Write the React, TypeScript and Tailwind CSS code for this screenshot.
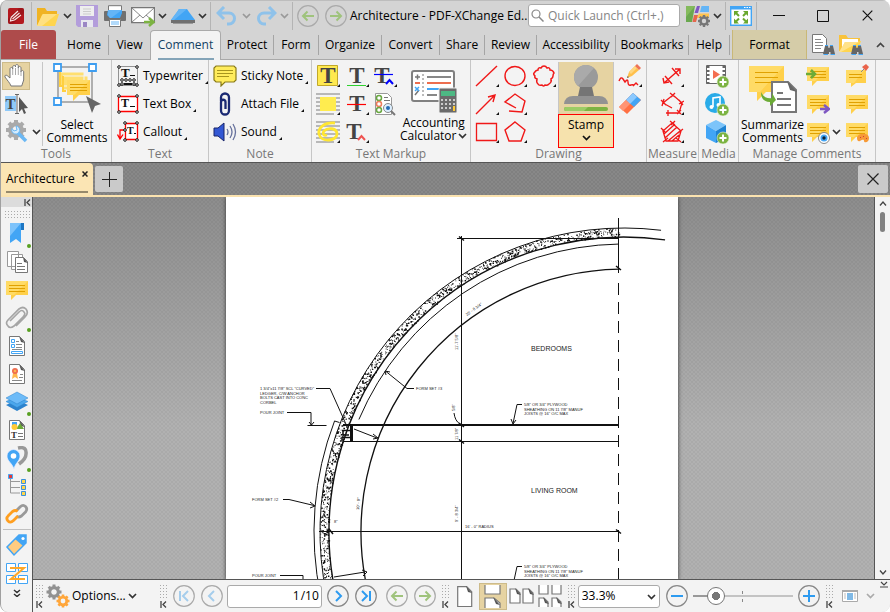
import React from "react";

type Kids = { children?: React.ReactNode };

/* ---------- shared bits ---------- */

function Svg({ w = 24, h = 24, box, children }: Kids & { w?: number; h?: number; box?: string }) {
  return (
    <svg width={w} height={h} viewBox={box ?? `0 0 ${w} ${h}`} fill="none" className="shrink-0" aria-hidden="true">
      {children}
    </svg>
  );
}

function Chevron({ color = "#333" }: { color?: string }) {
  return (
    <Svg w={9} h={6}>
      <path d="M1 1l3.500 3.500L8 1" stroke={color} strokeWidth="1.700" />
    </Svg>
  );
}

function Mark() {
  return (
    <Svg w={3} h={3}>
      <path d="M3 0v3H0z" fill="#111" />
    </Svg>
  );
}

function Divider() {
  return <span className="h-7 w-px shrink-0 bg-[#b4b4b4]" />;
}

function TBtn({ label, className = "", children }: Kids & { label: string; className?: string }) {
  return (
    <button aria-label={label} className={`flex shrink-0 items-center justify-center ${className}`}>
      {children}
    </button>
  );
}

function Bubble({ lines = true }: { lines?: boolean }) {
  return (
    <>
      <path d="M1 3h22v14H11l-5 5v-5H1z" fill="#ffd04a" />
      <path d="M1 3h22L9 17H1z" fill="#ffdb66" />
      {lines && <path d="M4 7.500h16M4 10.500h16M4 13.500h16" stroke="#e0a100" />}
    </>
  );
}

function Plus() {
  return (
    <>
      <circle cx="18" cy="18" r="6" fill="#7cb342" stroke="#e8f3d8" strokeWidth=".6" />
      <path d="M14.500 18h7M18 14.500v7" stroke="#fff" strokeWidth="2" />
    </>
  );
}

function Gear({ x, y, r, color }: { x: number; y: number; r: number; color: string }) {
  return (
    <g transform={`translate(${x} ${y})`}>
      <circle r={r * 0.58} stroke={color} strokeWidth={r * 0.42} />
      {[0, 45, 90, 135, 180, 225, 270, 315].map((a) => (
        <rect key={a} x={-r * 0.2} y={-r} width={r * 0.4} height={r * 0.35} fill={color} transform={`rotate(${a})`} />
      ))}
    </g>
  );
}

function Sheet({ children }: Kids) {
  return (
    <>
      <path d="M4.500 2.500h10l5 5v14h-15z" fill="#fff" stroke="#777" />
      <path d="M14 2l6 7-4-1z" fill="#555" />
      {children}
    </>
  );
}

function CircleArrow({ d, color, ring = "#aaa" }: { d: string; color: string; ring?: string }) {
  return (
    <Svg w={22} h={22}>
      <circle cx="11" cy="11" r="10.300" stroke={ring} strokeWidth="1.200" />
      <path d={d} stroke={color} strokeWidth="2" />
    </Svg>
  );
}

const LEFT_ARROW = "M17 11H6M10.500 6.500L6 11l4.500 4.500";
const RIGHT_ARROW = "M5 11h11M11.500 6.500L16 11l-4.500 4.500";

/* ---------- title bar ---------- */

function TitleBar() {
  return (
    <header className="flex h-[30px] shrink-0 items-center border-t border-[#bdbdbd]">
      <TBtn label="PDF-XChange Editor" className="w-[30px]">
        <Svg w={16} h={16}>
          <rect width="16" height="16" rx="2" fill="#b3191f" />
          <path d="M0 11L11 0h3a2 2 0 0 1 2 2v3L5 16H2a2 2 0 0 1-2-2z" fill="#8d1016" opacity=".55" />
          <path d="M3 9.500L10 3M4.500 11L11.500 5M6.500 12L13 7M3 9.500L2.500 13l4-1" stroke="#f7e4e4" strokeWidth="1.200" />
        </Svg>
      </TBtn>
      <Divider />
      <TBtn label="Open" className="ml-1">
        <Svg w={24} h={22}>
          <path d="M1 3h8l2 3h10v4H7L3 20H1z" fill="#f0b323" />
          <path d="M7 9h16l-4 12H1z" fill="#ffd54f" />
          <path d="M7 9h14L6 21H1l5-11z" fill="#ffe082" />
        </Svg>
      </TBtn>
      <TBtn label="Open menu" className="ml-[3px]"><Chevron /></TBtn>
      <TBtn label="Save" className="ml-1">
        <Svg w={22} h={22}>
          <path d="M0 0h22v22H2l-2-2z" fill="#b39ddb" />
          <path d="M4 1h14v10H4z" fill="#eee" />
          <path d="M7 4h8M7 6.500h8M7 9h8" stroke="#ccc" />
          <path d="M5 15h12v7H5z" fill="#e7e7ef" />
          <path d="M7 17h4v5H7z" fill="#9a86c4" />
        </Svg>
      </TBtn>
      <TBtn label="Print" className="ml-[6px]">
        <Svg w={22} h={22}>
          <path d="M4.500 8V.7h13V8" fill="#fff" stroke="#777" />
          <rect y="6" width="22" height="10" rx="1" fill="#707070" />
          <path d="M4 5h14v3l-2 5H6L3 10z" fill="#42a5f5" />
          <path d="M4 5h14L7 13H6L4 10z" fill="#64b5f6" />
          <path d="M5.500 14.500h11v7h-11z" fill="#fff" stroke="#777" />
          <path d="M7 17h8M7 19h8" stroke="#64b5f6" />
        </Svg>
      </TBtn>
      <TBtn label="Email" className="ml-1">
        <Svg w={26} h={22}>
          <path d="M1.600 2.600h22.800v15H1.600z" fill="#fff" stroke="#777" strokeWidth="1.200" />
          <path d="M2 3l11 10L24 3M2 17l8-7M24 17l-8-7" stroke="#888" />
          <path d="M14 17h9M19 13l4.500 4-4.500 4" stroke="#7cb342" strokeWidth="2.500" />
        </Svg>
      </TBtn>
      <TBtn label="Email menu" className="ml-[2px]"><Chevron /></TBtn>
      <TBtn label="Scan" className="ml-1">
        <Svg w={24} h={20}>
          <path d="M8 3h8l2 3 6 8H0l6-8z" fill="#42a5f5" />
          <path d="M8 3h8L3 14H0l6-8z" fill="#64b5f6" />
          <path d="M0 14h24v3H0z" fill="#707070" />
          <path d="M2 17h20v1H2z" fill="#999" />
        </Svg>
      </TBtn>
      <TBtn label="Scan menu" className="mx-[3px]"><Chevron /></TBtn>
      <Divider />
      <TBtn label="Undo" className="ml-[5px]">
        <Svg w={22} h={20}>
          <path d="M2 7h11a5.500 5.500 0 0 1 0 11H11M8 1L2 7l6 6" stroke="#8fc2ea" strokeWidth="3" />
        </Svg>
      </TBtn>
      <TBtn label="Undo history" className="ml-1"><Chevron color="#999" /></TBtn>
      <TBtn label="Redo" className="ml-1">
        <Svg w={22} h={20}>
          <path d="M20 7H9a5.500 5.500 0 0 0 0 11h2M14 1l6 6-6 6" stroke="#8fc2ea" strokeWidth="3" />
        </Svg>
      </TBtn>
      <TBtn label="Redo history" className="mx-[3px]"><Chevron color="#999" /></TBtn>
      <Divider />
      <TBtn label="Previous view" className="ml-1"><CircleArrow d={LEFT_ARROW} color="#9fc37c" /></TBtn>
      <TBtn label="Next view" className="ml-[6px]"><CircleArrow d={RIGHT_ARROW} color="#9fc37c" /></TBtn>
      <h1 className="min-w-0 flex-1 pl-[3px] whitespace-nowrap">Architecture - PDF-XChange Ed..</h1>
      <label className="flex h-[23px] w-[152px] shrink-0 items-center gap-1 rounded-[3px] border border-[#aaa] bg-white pl-[2px]">
        <Svg w={13} h={13}>
          <circle cx="5" cy="5" r="4" stroke="#888" strokeWidth="1.200" />
          <path d="M8 8l4.500 4.500" stroke="#888" strokeWidth="1.500" />
        </Svg>
        <input aria-label="Quick Launch" placeholder="Quick Launch (Ctrl+.)" className="w-full min-w-0 bg-transparent outline-none placeholder:text-[#858585]" />
      </label>
      <span className="ml-[3px]"><Divider /></span>
      <TBtn label="UI options" className="ml-[2px]">
        <Svg w={25} h={22}>
          <path d="M1 1h9L7 17H1z" fill="#6aa84f" />
          <path d="M1 1h9L1 12z" fill="#84ba5c" />
          <path d="M12 1h3l-2 7H9.500z" fill="#7e57c2" />
          <path d="M16.500 1H24v6h-9z" fill="#64b5f6" />
          <path d="M14 8.500h10V13H12z" fill="#ffc44d" />
          <path d="M9 10h4l-2 7H7.500z" fill="#e5674c" />
          <Gear x={19} y={16} r={6} color="#777" />
        </Svg>
      </TBtn>
      <TBtn label="UI options menu" className="mx-[3px]"><Chevron /></TBtn>
      <Divider />
      <TBtn label="Full screen" className="mx-1">
        <Svg w={22} h={20}>
          <path d="M.7.700h20.600v18.600H.7z" fill="#fff" stroke="#42a5f5" strokeWidth="1.400" />
          <path d="M0 0h22v3.500H0z" fill="#42a5f5" />
          <path d="M14 1.500h1.500m1 0H18m1 0h1.500" stroke="#fff" />
          <path d="M4 5h5L4 10zM18 5h-5l5 5zM4 17.500h5l-5-5zM18 17.500h-5l5-5z" fill="#6aa82e" />
          <path d="M5 6l4 4M17 6l-4 4M5 16.500l4-4M17 16.500l-4-4" stroke="#6aa82e" strokeWidth="2" />
        </Svg>
      </TBtn>
      <Divider />
      <TBtn label="Minimize" className="w-[44px]"><Svg w={12} h={2}><path d="M0 .5h12" stroke="#111" /></Svg></TBtn>
      <TBtn label="Maximize" className="w-[44px]"><Svg w={12} h={12}><path d="M.5.500h11v11H.5z" stroke="#111" /></Svg></TBtn>
      <TBtn label="Close" className="w-[45px]"><Svg w={11} h={11}><path d="M.7.700l9.600 9.600M10.300.700L.7 10.300" stroke="#111" strokeWidth="1.200" /></Svg></TBtn>
    </header>
  );
}

/* ---------- ribbon tabs ---------- */

const tabs = [
  { name: "Organize", w: "w-[63px]" },
  { name: "Convert", w: "w-[58px]" },
  { name: "Share", w: "w-[45px]" },
  { name: "Review", w: "w-[52px]" },
  { name: "Accessibility", w: "w-[79px]" },
  { name: "Bookmarks", w: "w-[73px]" },
  { name: "Help", w: "w-[41px]" },
];

function Binoculars() {
  return (
    <>
      <path d="M14 13h3l.500 2h1l.500-2h3l2 8h-4.500v-2h-1.500v2H12z" fill="#666" />
      <path d="M14 12.500h3M19 12.500h3M12.500 21.500H17M19.500 21.500H24" stroke="#42a5f5" />
    </>
  );
}

function RibbonTabs() {
  const tab = "flex h-5 shrink-0 items-center justify-center border-r border-[#a5a5a5]";
  return (
    <nav className="flex h-[30px] shrink-0 items-center border-b border-[#a9a9a9]">
      <button className="h-full w-[55px] shrink-0 rounded-t-[3px] bg-[#ae4b4b] text-white">File</button>
      <button className={`${tab} w-[53px] pl-1`}>Home</button>
      <button className="w-[41px] shrink-0">View</button>
      <button className="flex h-[30px] w-[71px] shrink-0 flex-col items-center rounded-t border border-b-0 border-[#aaa] bg-[#f3f3f3] pt-[6px] text-[#123f63]">
        Comment
        <span className="mt-auto h-[2px] w-14 bg-[#84a4b8]" />
      </button>
      <button className={`${tab} w-[53px]`}>Protect</button>
      <button className={`${tab} w-[45px]`}>Form</button>
      {tabs.map((t) => (
        <button key={t.name} className={`${tab} ${t.w}`}>{t.name}</button>
      ))}
      <button className="ml-[2px] h-full w-[75px] shrink-0 border-x border-[#c9b877] bg-[#d5cca8]">Format</button>
      <TBtn label="Find" className="ml-1">
        <Svg w={24} h={23}>
          <path d="M1.500 1.500h10l4 4v14h-14z" fill="#fff" stroke="#777" />
          <path d="M4 6.500h6M4 9.500h8M4 12.500h8M4 15.500h6" stroke="#888" />
          <Binoculars />
        </Svg>
      </TBtn>
      <TBtn label="Search" className="ml-1">
        <Svg w={24} h={23}>
          <path d="M0 2h7l2 3h12v4H6L2 18H0z" fill="#f9c33c" />
          <path d="M6 8h16l-4 11H1z" fill="#ffd54f" />
          <path d="M3 6h16v3H6L3 15z" fill="#fff" />
          <path d="M6 9h14L2 19H0z" fill="#ffe28a" />
          <Binoculars />
        </Svg>
      </TBtn>
      <TBtn label="Collapse ribbon" className="ml-auto pr-[5px]">
        <Svg w={9} h={6}><path d="M1 5l3.500-3.500L8 5" stroke="#444" strokeWidth="1.700" /></Svg>
      </TBtn>
    </nav>
  );
}

/* ---------- ribbon ---------- */

function Group({ title, className, children }: Kids & { title: string; className: string }) {
  return (
    <section className={`flex shrink-0 flex-col border-r border-[#c6c6c6] pt-[2px] ${className}`}>
      <div className="flex h-[84px]">{children}</div>
      <h2 className="text-center leading-4 whitespace-nowrap text-[#777]">{title}</h2>
    </section>
  );
}

function Tool({ label, mark = true, children }: Kids & { label: string; mark?: boolean }) {
  return (
    <button aria-label={label} className="relative flex h-7 w-7 shrink-0 items-center justify-center">
      {children}
      {mark && <span className="absolute right-[2px] bottom-[3px]"><Mark /></span>}
    </button>
  );
}

function RowTool({ label, children }: Kids & { label: string }) {
  return (
    <button className="flex h-7 items-center gap-1 whitespace-nowrap">
      {children}
      <span className="flex h-full items-center gap-[2px]">
        {label}
        <span className="self-end pb-[6px]"><Mark /></span>
      </span>
    </button>
  );
}

function BigT({ x = 12, y = 19, size = 23, color = "#444" }) {
  return (
    <text x={x} y={y} fontSize={size} fontFamily="Liberation Serif, serif" fontWeight="700" textAnchor="middle" fill={color}>T</text>
  );
}

const dots = (pts: number[][]) => pts.map(([x, y]) => <circle key={`${x}-${y}`} cx={x} cy={y} r="1.300" fill="#fff" stroke="#111" />);

function ToolsGroup() {
  return (
    <Group title="Tools" className="w-[111px]">
      <div className="flex w-[42px] flex-col border-r border-[#c6c6c6]">
        <button aria-label="Hand" className="ml-px flex h-7 w-7 items-center justify-center border border-[#cdbb8a] bg-[#e6d3a2]">
          <Svg>
            <path d="M7 22c-1-3-4-6-6-9-.8-1.500 1-2.500 2.300-1.300L6 14V5c0-2 2.700-2 2.700 0V3c0-2 2.800-2 2.800 0V2c0-2 2.800-2 2.800 0v2c0-2 2.700-2 2.700 0v4c0-2 2.700-2 2.700 0v8l-2 6z" fill="#fff" stroke="#777" />
            <path d="M8.700 5v6M11.500 4v7M14.300 4v7M17 7v5" stroke="#aaa" />
          </Svg>
        </button>
        <TBtn label="Select text" className="h-7 w-[30px]">
          <Svg>
            <path d="M1 4h11v15H1z" fill="#90caf9" />
            <text x="6.500" y="17" fontSize="15" fontFamily="Liberation Serif, serif" fontWeight="700" textAnchor="middle" fill="#444">T</text>
            <path d="M11 2.500h4M13 3v18M11 21.500h4" stroke="#666" />
            <path d="M15 5l9 11-4 .5 2 4.500-2 1-2-5-3 3z" fill="#555" />
          </Svg>
        </TBtn>
        <div className="flex h-7 items-center">
          <TBtn label="Settings" className="w-[31px]">
            <Svg>
              <Gear x={11} y={10} r={10} color="#aaa" />
              <path d="M12 12l9 9" stroke="#6bb8f4" strokeWidth="3.500" />
              <path d="M7 8.500a4 4 0 1 0 4-2.500l1 4-3 1z" fill="#d5ebfc" stroke="#6bb8f4" />
            </Svg>
          </TBtn>
          <Chevron />
        </div>
      </div>
      <button className="flex flex-1 flex-col items-center pt-px leading-[13px]">
        <Svg w={48} h={52}>
          <path d="M5 4h34v35H5z" stroke="#999" strokeWidth="1.500" />
          <path d="M7 9h24v14H7zM10 13h25v14H10z" fill="#ffdf70" stroke="#f3f3f3" />
          <path d="M7 9v14h3M10 13v15h3" stroke="#ffcf3f" strokeWidth="2" />
          <path d="M14 17h23v15H26l-6 6v-6h-6z" fill="#ffd04a" />
          <path d="M14 17h23L21 32h-7z" fill="#ffdb66" />
          <path d="M17 21.500h17M17 24.500h17M17 27.500h17" stroke="#e0a100" />
          <path d="M1 1h7v7H1zM36 1h7v7h-7zM1 35h7v7H1z" fill="#fff" stroke="#3d9df0" strokeWidth="1.800" />
          <path d="M33 33l15 8-6 2-3 7z" fill="#666" />
        </Svg>
        <span className="mt-[3px]">Select<br />Comments</span>
      </button>
    </Group>
  );
}

function TextGroup() {
  return (
    <Group title="Text" className="w-[97px]">
      <div className="flex flex-col items-start pl-[5px]">
        <RowTool label="Typewriter">
          <Svg w={22} h={22}>
            <path d="M1.500 1.500h19v19h-19z" stroke="#333" strokeDasharray="1 1" />
            <text x="4" y="12" fontSize="13" fontFamily="Liberation Serif, serif" fontWeight="700" fill="#111">T</text>
            <path d="M13 10.500h5" stroke="#111" />
            {dots([[5, 15], [9, 15], [13, 15], [17, 15], [5, 19], [17, 19]])}
            <path d="M7 19h8" stroke="#111" strokeWidth="2" />
            {dots([[2, 2], [20, 2], [2, 20], [20, 20]])}
          </Svg>
        </RowTool>
        <RowTool label="Text Box">
          <Svg w={22} h={22}>
            <path d="M1.500 3.500h19v15h-19z" fill="#fff" stroke="#f00" strokeWidth="1.300" />
            <text x="4" y="14" fontSize="12" fontFamily="Liberation Serif, serif" fontWeight="700" fill="#111">T</text>
            <path d="M13 13.500h5" stroke="#111" />
            {dots([[2, 3], [20, 3], [2, 19], [20, 19]])}
          </Svg>
        </RowTool>
        <RowTool label="Callout">
          <Svg w={22} h={22}>
            <path d="M8.500 2.500h12v16h-12z" fill="#fff" stroke="#f00" strokeWidth="1.300" />
            <path d="M8 9H3v8M.5 13.500L3 18l3-4.500" stroke="#f00" strokeWidth="1.300" />
            <text x="10" y="13" fontSize="10" fontFamily="Liberation Serif, serif" fontWeight="700" fill="#111">T</text>
            <path d="M17 12.500h2" stroke="#111" />
            {dots([[8, 2], [20, 2], [8, 9], [8, 19], [20, 19]])}
          </Svg>
        </RowTool>
      </div>
    </Group>
  );
}

function NoteGroup() {
  return (
    <Group title="Note" className="w-[103px]">
      <div className="flex flex-col items-start pl-1">
        <RowTool label="Sticky Note">
          <Svg w={24} h={22}>
            <path d="M3 1h18l2 2v12l-2 2H12l-4 4v-4H3l-2-2V3z" fill="#ffec5c" stroke="#897b18" strokeWidth="1.200" />
            <path d="M4 5.500h16M4 8.500h16M4 11.500h12" stroke="#a7951d" />
          </Svg>
        </RowTool>
        <RowTool label="Attach File">
          <Svg w={24} h={24}>
            <path d="M8 9V5.500a4 4 0 0 1 8 0v13a4 4 0 0 1-8 0V10a2.200 2.200 0 0 1 4.500 0v7" stroke="#1b2a73" strokeWidth="2.300" />
          </Svg>
        </RowTool>
        <RowTool label="Sound">
          <Svg w={24} h={20}>
            <path d="M1 6h4l6-5v18l-6-5H1z" fill="#3358d4" stroke="#18256b" />
            <path d="M14 7q2 3 0 6M17 4q4 6 0 12M20 2q5 8 0 16" stroke="#66719c" strokeWidth="1.300" />
          </Svg>
        </RowTool>
      </div>
    </Group>
  );
}

function MarkupGroup() {
  return (
    <Group title="Text Markup" className="w-[159px]">
      <div className="ml-[2px] grid w-[86px] shrink-0 grid-cols-3">
        <Tool label="Highlight text">
          <Svg><path d="M1.500 1.500h20v20h-20z" fill="#ffe94f" stroke="#c1a82a" /><BigT /></Svg>
        </Tool>
        <Tool label="Underline text"><Svg><BigT /><path d="M2 21.500h19" stroke="#2fd12f" /></Svg></Tool>
        <Tool label="Replace text">
          <Svg><BigT x={9} /><path d="M1 10.500h19" stroke="#00f" strokeWidth="1.200" /><path d="M13 20l3.500-4 3.500 4" stroke="#00f" strokeWidth="2" /></Svg>
        </Tool>
        <Tool label="Highlight area">
          <Svg><path d="M0 2h24M0 6h24M0 10h24M0 14h24M0 18h24M0 22h18" stroke="#a5a5a5" strokeWidth="1.500" /><path d="M4 5h16v14H4z" fill="#ffec4f" /></Svg>
        </Tool>
        <Tool label="Strikeout text"><Svg><BigT /><path d="M2 12.500h19" stroke="#f00" strokeWidth="1.200" /></Svg></Tool>
        <Tool label="Check text" mark={false}>
          <Svg>
            <path d="M2.500 1.500h12l4 4v17h-16z" fill="#fff" stroke="#999" />
            <circle cx="6" cy="6" r="2.500" stroke="#69a842" strokeWidth="1.500" />
            <circle cx="6" cy="12" r="2.500" stroke="#ed7d5c" strokeWidth="1.500" />
            <circle cx="6" cy="18" r="2.500" stroke="#69a842" strokeWidth="1.500" />
            <path d="M11 5.500h4M11 8.500h6" stroke="#777" />
            <circle cx="15" cy="16" r="4.500" fill="#dbeeff" stroke="#888" />
            <circle cx="15" cy="16" r="2" fill="#236bb5" />
            <path d="M18 19l4 4" stroke="#777" strokeWidth="2" />
          </Svg>
        </Tool>
        <Tool label="Freehand highlight">
          <Svg><path d="M0 2h24M0 6h24M0 10h24M0 14h24M0 18h24M0 22h18" stroke="#a5a5a5" strokeWidth="1.500" /><path d="M19 3C8 2 2 8 3 14c2 9 18 7 18 0 0-6-9-7-13-3-2 3 0 5 3 4" stroke="#ffe632" strokeWidth="2.800" /></Svg>
        </Tool>
        <Tool label="Insert text"><Svg><BigT x={9} /><path d="M13 20l3.500-4 3.500 4" stroke="#ef5350" strokeWidth="2" /></Svg></Tool>
      </div>
      <button className="flex flex-1 flex-col items-center pt-[7px] pr-[6px] leading-[13px]">
        <Svg w={46} h={44}>
          <rect x="1" y="2" width="42" height="30" rx="2" fill="#fff" stroke="#808080" strokeWidth="2" />
          <path d="M4 8h5M6.500 5.500v5M4 26l4-5" stroke="#777" strokeWidth="1.500" />
          <path d="M4 14h5" stroke="#ed6e4f" strokeWidth="2" />
          <path d="M4 18l4 4M8 18l-4 4" stroke="#42a5f5" strokeWidth="1.500" />
          <path d="M12 5v24" stroke="#777" strokeDasharray="2 2" />
          <path d="M16 8h24M16 26h10" stroke="#888" strokeWidth="2" />
          <path d="M16 14h24" stroke="#ed6e4f" strokeWidth="2" />
          <path d="M16 20h12" stroke="#42a5f5" strokeWidth="2" />
          <rect x="28" y="19" width="18" height="25" rx="1" fill="#6b6b6b" stroke="#eee" />
          <path d="M30 22h14v5H30z" fill="#4db984" />
          <path d="M30 31h14M30 35h14M30 39h14" stroke="#ccc" strokeWidth="2" strokeDasharray="2 2" />
          <path d="M43 37v5" stroke="#ffca36" strokeWidth="2" />
        </Svg>
        <span className="mt-[3px]">Accounting</span>
        <span className="flex items-center gap-[2px]">Calculator <Chevron /></span>
      </button>
    </Group>
  );
}

const RED = "#f01818";

function DrawingGroup() {
  return (
    <Group title="Drawing" className="w-[176px]">
      <div className="ml-[2px] grid w-[85px] shrink-0 grid-cols-3">
        <Tool label="Line"><Svg><path d="M1 22L22 2" stroke={RED} strokeWidth="1.400" /></Svg></Tool>
        <Tool label="Oval"><Svg><ellipse cx="12" cy="12" rx="10" ry="9.500" stroke={RED} strokeWidth="1.400" /></Svg></Tool>
        <Tool label="Cloud"><Svg><path d="M12 2q2 0 3 2 3-1 3 2 3 0 4 3-1 1-1 3 0 2-2 3 1 3-2 5-2 2-4 1-1 2-3 0-3 1-4-1-2-2-1-5-3-1-2-3-2-2-1-3 2-3 4-3 0-3 3-2 1-2 3-2z" stroke={RED} strokeWidth="1.500" /></Svg></Tool>
        <Tool label="Arrow"><Svg><path d="M1 22L19 4M13 5l7-2-2 7" stroke={RED} strokeWidth="1.400" /></Svg></Tool>
        <Tool label="Polyline"><Svg><path d="M13 16L2 10l10-8 10 7-3 11-13-1" stroke={RED} strokeWidth="1.400" /></Svg></Tool>
        <span />
        <Tool label="Rectangle"><Svg><path d="M1.500 3.500h20v17h-20z" stroke={RED} strokeWidth="1.300" /></Svg></Tool>
        <Tool label="Polygon"><Svg><path d="M12 2l10 8-4 11H6L2 10z" stroke={RED} strokeWidth="1.400" /></Svg></Tool>
      </div>
      <button className="flex h-[86px] w-14 shrink-0 flex-col items-center">
        <span className="flex h-[52px] w-full justify-center border-x border-[#c6c6c6] bg-[#e6d3a2] pt-[2px]">
          <Svg w={46} h={48}>
            <circle cx="23" cy="13" r="12" fill="#9a9a9a" />
            <path d="M15 22a12 12 0 0 1 16-18z" fill="#aaa" />
            <path d="M17 23h12l2 9H15z" fill="#757575" />
            <path d="M1 40q1-8 9-8h26q8 0 9 8z" fill="#929292" />
            <rect x="1" y="43" width="44" height="4" rx="2" fill="#7cb342" />
            <path d="M3 43h22l-4 4H3a2 2 0 0 1 0-4z" fill="#9ccc65" />
          </Svg>
        </span>
        <span className="flex h-[34px] w-full flex-col items-center gap-[2px] border border-[#f00] bg-[#f6e2ad] pt-px leading-[17px]">
          Stamp
          <Chevron color="#111" />
        </span>
      </button>
      <div className="ml-[2px]">
        <Tool label="Pencil">
          <Svg>
            <path d="M1 17q2-5 4-2t2 3q3-4 3 0t3 3 2 1l3-3 2 2" stroke={RED} strokeWidth="1.400" />
            <path d="M9 14l2-6 6-6 4 4-7 6z" fill="#ffc04b" />
            <path d="M11 8l6-6 2 2-6 6z" fill="#ffd67f" />
            <path d="M17 2l4 4 2-2-4-4z" fill="#ee7256" />
            <path d="M9 14l.7-2 1.300 1.300z" fill="#555" />
          </Svg>
        </Tool>
        <Tool label="Eraser" mark={false}>
          <Svg>
            <path d="M1 15L15 1l8 7L9 22z" fill="#ff7043" />
            <path d="M8 8l7-7 8 7-7 7z" fill="#42a5f5" />
            <path d="M8 8l7-7 4 4-7 7z" fill="#8bc9ff" />
            <path d="M1 15l7-7 4 4-7 7z" fill="#ff9474" />
          </Svg>
        </Tool>
      </div>
    </Group>
  );
}

function MeasureAndMedia() {
  return (
    <>
      <Group title="Measure" className="w-[52px]">
        <div className="ml-[11px]">
          <Tool label="Distance"><Svg><path d="M4 19L20 5M3 14l1 5 5-1M15 5h5v5M5 12l7 8M12 4l7 8" stroke={RED} strokeWidth="1.400" /></Svg></Tool>
          <Tool label="Perimeter"><Svg><path d="M12 16L3 11l10-8 9 8-3 10H6M1 8l5 5M4 7l-2 7M10 1l5 4M15 1l-4 4M19 12l5-3M19 8l4 5M17 18l4 4M21 18l-4 4M8 18v6" stroke={RED} strokeWidth="1.300" /></Svg></Tool>
          <Tool label="Area"><Svg><path d="M12 3l9 8-3 10H6L3 11zM4 14L14 5M5 18L17 7M8 21L20 11M12 21l7-6M1 8l5 5M10 1l5 4M15 1l-4 4M18 13l5-4M16 18l5 4M3 22l5-4" stroke={RED} strokeWidth="1.300" /></Svg></Tool>
        </div>
      </Group>
      <Group title="Media" className="w-10">
        <div className="ml-1">
          <Tool label="Add video" mark={false}>
            <Svg><path d="M1.500 1.500h19v18h-19z" fill="#fff" stroke="#666" /><path d="M3 2v18M19 2v18" stroke="#666" strokeWidth="3" strokeDasharray="2 2" /><path d="M8 6l7 4.500-7 4.500z" fill="#f46e50" /><Plus /></Svg>
          </Tool>
          <Tool label="Add sound" mark={false}>
            <Svg><circle cx="10" cy="11" r="10" fill="#29abe8" /><path d="M8 15V6l7-1v8" stroke="#fff" strokeWidth="1.600" /><circle cx="6.500" cy="15" r="2" fill="#fff" /><circle cx="13.500" cy="13" r="2" fill="#fff" /><Plus /></Svg>
          </Tool>
          <Tool label="Add 3D" mark={false}>
            <Svg><path d="M11 0l10 5-10 6L1 5z" fill="#7cc4fa" /><path d="M1 5l10 6v12L1 18z" fill="#42a5f5" /><path d="M21 5l-10 6v12l10-5z" fill="#1e82d2" /><Plus /></Svg>
          </Tool>
        </div>
      </Group>
    </>
  );
}

function ManageGroup() {
  return (
    <Group title="Manage Comments" className="w-[137px]">
      <button className="flex w-[67px] flex-col items-center pt-px leading-[13px]">
        <Svg w={50} h={52}>
          <path d="M1 3h35v26H18l-9 9v-9H1z" fill="#ffd04a" />
          <path d="M1 3h35L12 29H1z" fill="#ffdb66" />
          <path d="M7 9.500h23M7 14.500h23M7 19.500h23" stroke="#e0a100" />
          <path d="M24 19h16l8 8v22H24z" fill="#fff" stroke="#777" strokeWidth="2" />
          <path d="M39 18l10 11-7-2z" fill="#666" />
          <path d="M29 30h6M29 36h14M29 42h14" stroke="#777" strokeWidth="2" />
          <path d="M13 29q3 7 11 6v-5l4 7-6 6v-4q-9 0-9-10z" fill="#6cab37" />
        </Svg>
        <span className="mt-[3px]">Summarize<br />Comments</span>
      </button>
      <div className="ml-[-2px] grid grid-cols-[39px_28px]">
        <Tool label="Import comments" mark={false}><Svg><Bubble /><path d="M0 10h8M5 6l4 4-4 4" stroke="#6cab37" strokeWidth="2.500" /></Svg></Tool>
        <Tool label="Pin comment" mark={false}><Svg><path d="M1 6h20v13H11l-5 4v-4H1z" fill="#ffd04a" /><path d="M1 6h18L9 19H1z" fill="#ffdb66" /><path d="M4 10.500h13M4 13.500h13" stroke="#e0a100" /><path d="M16 8l4-4" stroke="#888" /><path d="M17 3l4-3 3 3-3 4z" fill="#e9634b" /></Svg></Tool>
        <Tool label="Export comments" mark={false}><Svg><Bubble /><path d="M14 17h8M18 13l5 4-5 4" stroke="#7e57c2" strokeWidth="2.500" /></Svg></Tool>
        <Tool label="Comments list" mark={false}><Svg><Bubble /></Svg></Tool>
        <div className="flex items-center">
          <Tool label="Show comments" mark={false}><Svg><Bubble /><circle cx="18" cy="18" r="5.500" fill="#fff" stroke="#888" /><circle cx="18" cy="18" r="3.500" fill="#42a5f5" /><circle cx="18" cy="18" r="1.700" fill="#123" /></Svg></Tool>
          <Chevron />
        </div>
        <Tool label="Comment styles" mark={false}><Svg><Bubble /><path d="M12 18c0-5 12-6 12 0 0 5-5 5-5 3s-2-1-4 0-3-1-3-3z" fill="#f79a36" /><path d="M15 17.500h1m2-1h1m2 2h1" stroke="#d13b3b" /></Svg></Tool>
      </div>
    </Group>
  );
}

/* ---------- side panel ---------- */

const panes: { name: string; dot?: boolean; icon: React.ReactNode }[] = [
  { name: "Bookmarks", dot: true, icon: <><path d="M5 1h14v7h-3v13l-5-4-6 4z" fill="#42a5f5" /><path d="M5 1h11L5 14z" fill="#7dc3fb" /><path d="M16 1h3v7h-3z" fill="#1d76c2" /></> },
  { name: "Thumbnails", icon: <><path d="M2.500 1.500h11v15h-11zM6.500 4.500h11v15h-11z" fill="#fff" stroke="#999" /><path d="M10.500 7.500h8l4 4v11h-12z" fill="#fff" stroke="#777" /><path d="M18 7l5 6-4-1z" fill="#555" /><path d="M12 13.500h5M12 16.500h8M12 19.500h8" stroke="#777" /></> },
  { name: "Comments", icon: <Bubble /> },
  { name: "Attachments", dot: true, icon: <path d="M5 15l9-9q3-3 5 0 2 2-1 5l-9 9q-4 3-6 0-3-3 0-6L14 3q4-3 7 0 3 4-1 8l-9 9" stroke="#a5a5a5" strokeWidth="1.700" /> },
  { name: "Fields", icon: <Sheet><path d="M6.500 5.500h3v3h-3zM6.500 10.500h3v3h-3zM6.500 17.500h11v2h-11z" stroke="#42a5f5" /><path d="M11 7.500h3M11 10.500h6M11 13.500h6M7 15.500h10" stroke="#888" /></Sheet> },
  { name: "Signatures", icon: <Sheet><path d="M8 11l-1 6 3-2 3 2-1-6z" fill="#ffb74d" /><circle cx="10" cy="9" r="3" fill="#ef6c50" /><circle cx="10" cy="9" r="1.300" fill="#ffb74d" /><path d="M7 18.500h10M15 12.500h3M14 15.500h4" stroke="#888" /></Sheet> },
  { name: "Layers", dot: true, icon: <><path d="M1 15l11-5 11 5-11 6z" fill="#2d83cd" /><path d="M1 11.500l11-5 11 5-11 6z" fill="#4ba7ec" stroke="#2d83cd" strokeWidth=".5" /><path d="M1 8l11-6 11 6-11 6z" fill="#6dbbf8" stroke="#2d83cd" strokeWidth=".5" /></> },
  { name: "Content", icon: <Sheet><path d="M11 11l4-6 4 6z" fill="#6cab37" /><path d="M7 4h5v4H7z" fill="#42a5f5" /><circle cx="9.500" cy="9" r="3" fill="#ffca36" /><text x="6" y="20" fontSize="9" fontFamily="Liberation Serif, serif" fontWeight="700" fill="#333">T</text><path d="M13 15.500h5M13 18.500h5" stroke="#777" /></Sheet> },
  { name: "Destinations", dot: true, icon: <><path d="M13 2q9-2 8 6 0 5-7 10" stroke="#999" strokeWidth="3.500" /><path d="M2 10a6.500 6.500 0 0 1 13 0c0 5-5 7-6 13-2-6-7-8-7-13z" fill="#42a5f5" stroke="#eef" strokeWidth=".7" /><circle cx="8.500" cy="10" r="2.800" fill="#fff" /></> },
  { name: "Model tree", icon: <><path d="M5.500 3v16H15M5.500 7.500H15M5.500 13.500H15" stroke="#999" /><path d="M3.500.500h4v4h-4z" fill="#e53935" stroke="#42a5f5" /><path d="M16.500 5.500h4v4h-4zM16.500 11.500h4v4h-4zM16.500 17.500h4v4h-4z" fill="#ffd54a" stroke="#3991dc" /></> },
  { name: "Links", icon: <><path d="M11 9l4-4q3-3 5.500-.5 2.500 2.500 0 5.500l-4 4q-3 2-5 0" stroke="#999" strokeWidth="2.800" /><path d="M13 14l-4.500 4.500q-3 3-5.500.500-2.500-2.500.500-5.500l4-4q3-2 5 0" stroke="#ff9f20" strokeWidth="2.800" /></> },
];

function Collapse() {
  return <Svg w={7} h={7}><path d="M1 0v7M6 .5L3 3.500l3 3" stroke="#444" strokeWidth="1.300" /></Svg>;
}

function SidePanel() {
  return (
    <aside className="flex w-8 shrink-0 flex-col items-center border-r border-[#555] bg-[#f3f3f3]">
      <button aria-label="Collapse panes" className="flex h-[10px] w-full items-center justify-end bg-[#dcdcdc] pr-px"><Collapse /></button>
      <span className="mt-[3px] h-[10px] w-[26px] shrink-0 bg-[radial-gradient(#aaa_1px,transparent_1px)] bg-[size:3px_3px]" />
      {panes.map((p) => (
        <button key={p.name} aria-label={p.name} className="relative flex h-7 w-full shrink-0 items-center justify-center">
          <Svg>{p.icon}</Svg>
          {p.dot && <span className="absolute right-[1px] bottom-0 h-1 w-1 rounded-full bg-[#58a020]" />}
        </button>
      ))}
      <span className="mt-px h-px w-7 shrink-0 bg-[#c0c0c0]" />
      <TBtn label="Tags" className="h-7 w-full pt-[2px]">
        <Svg><path d="M2 14L14 2h7v8L9 22z" fill="#ffcc80" stroke="#42a5f5" strokeWidth="1.500" /><path d="M10 6l4-4h7v8l-3 3z" fill="#42a5f5" /><circle cx="18" cy="5.500" r="1.600" fill="#fff" /></Svg>
      </TBtn>
      <TBtn label="Order" className="h-7 w-full pt-px">
        <Svg><path d="M1.500 2.500h9v8h-9zM13.500 2.500h9v8h-9zM1.500 14.500h9v8h-9zM13.500 14.500h9v8h-9z" fill="#fff" stroke="#42a5f5" /><path d="M5 7h14L6 18h14" stroke="#ffa726" strokeWidth="2" /></Svg>
      </TBtn>
      <TBtn label="More panes" className="mt-[3px]">
        <Svg w={8} h={8}><path d="M1 1l3 2.500L7 1M1 5l3 2.500L7 5" stroke="#333" strokeWidth="1.500" /></Svg>
      </TBtn>
    </aside>
  );
}

/* ---------- drawing sheet ---------- */

const CX = 624;
const CY = 532;

const at = (r: number, deg: number) => {
  const a = (deg * Math.PI) / 180;
  return [CX + r * Math.cos(a), CY - r * Math.sin(a)];
};

const arc = (r: number, from: number, to: number) => {
  const [x1, y1] = at(r, from);
  const [x2, y2] = at(r, to);
  return `M${x1} ${y1}A${r} ${r} 0 0 1 ${x2} ${y2}`;
};

// concrete stipple, seeded so that every render gives the same grain
function stipple() {
  let seed = 11;
  const rnd = () => (seed = (seed * 16807) % 2147483647) / 2147483647;
  let d = "";
  for (let i = 0; i < 1150; i++) {
    const [x, y] = at(295.5 + rnd() * 9, 91 + rnd() * 100);
    const s = rnd() > 0.7 ? 1.5 : 0.9;
    d += `M${x.toFixed(1)} ${y.toFixed(1)}h${s}v${s}h-${s}z`;
  }
  return d;
}

const GRAIN = stipple();

function Note({ x, y, lines }: { x: number; y: number; lines: string[] }) {
  return (
    <text x={x} y={y} fontSize="4">
      {lines.map((l, i) => (
        <tspan key={l} x={x} dy={i ? 4.6 : 0}>{l}</tspan>
      ))}
    </text>
  );
}

const PLYWOOD = ['5/8" OR 3/4" PLYWOOD', 'SHEATHING ON 11 7/8" MANUF', 'JOISTS @ 16" O/C MAX'];

function Drawing() {
  return (
    <svg viewBox="226 197 452 383" className="h-[383px] w-[452px] shrink-0 bg-white shadow-[0_0_4px_#333]" fill="none" stroke="#111" role="img" aria-label="Architecture section drawing">
      <path d={GRAIN} fill="#111" stroke="none" />
      <path d={arc(304, 192, 83)} />
      <path d={arc(295, 192, 82)} strokeWidth="1.400" />
      <path d={arc(288, 157, 91)} />
      <path d={arc(310, 192, 159)} />
      <path d="M334.500 421l5 1.500" />
      <path d={arc(263, 192, 91)} strokeWidth="1.300" />
      <path d="M618.500 218v55" />
      <path d="M618.500 283v297" strokeDasharray="12 7" />
      <path d="M457 238.500h161M461.500 236v344M319 531.500h300M343 441.500h275" />
      <path d="M343 425h275" strokeWidth="2" />
      <path d="M459 236.500l5 4M616 529.500l5 4M616 266l5 4M459 423l5 4M459 439.500l5 4M329 529l4 5" strokeWidth="1.500" />
      <path d="M342 430.500h8M343 431v4h6M350 437.500h-8v4" strokeWidth="1.500" />
      <path d="M351.500 425v16" strokeWidth="3" />
      <path d="M354 429l23 9M373 434l5 4-5 1M334 577l31-5M362 570l5 2-4 4" />
      <path d="M316 388.500h14l17 38M287 412.500h24v13M307.500 425.500h19M309 422l2.500 3 2.500-3" />
      <path d="M414 388.500h-7l-21-17M390 372l-5-1 1 4M283 499.500h6l25 6M310 502l5 4-5 2" />
      <path d="M522 404.500h-5l-4 19M511 419l2 5 3-4M522 566.500h-5l-3 14M280 575.500h23v6M454 413q1 8 6 11" />
      <g fill="#222" stroke="none" fontFamily="Liberation Sans, Arial, sans-serif">
        <text x="531" y="351" fontSize="7">BEDROOMS</text>
        <text x="531" y="493" fontSize="7">LIVING ROOM</text>
        <Note x={260} y={390} lines={['1 3/4"x11 7/8" SCL "CURVED"', "LEDGER, C/W ANCHOR", "BOLTS CAST INTO CONC", "CORBEL"]} />
        <Note x={260} y={414} lines={["POUR JOINT"]} />
        <Note x={416} y={390} lines={["FORM SET #3"]} />
        <Note x={252} y={501} lines={["FORM SET #2"]} />
        <Note x={252} y={577} lines={["POUR JOINT"]} />
        <Note x={524} y={406} lines={PLYWOOD} />
        <Note x={524} y={568} lines={PLYWOOD} />
        <Note x={465} y={528} lines={["16' - 0\"  RADIUS"]} />
        <Note x={334} y={523} lines={['8"']} />
        <text fontSize="4" transform="translate(458 350) rotate(-90)">11'-7 5/8"</text>
        <text fontSize="4" transform="translate(458 440) rotate(-90)">11 7/8"</text>
        <text fontSize="4" transform="translate(455 411) rotate(-90)">5/8"</text>
        <text fontSize="4" transform="translate(458 522) rotate(-90)">9' - 8 3/4"</text>
        <text fontSize="4" transform="translate(359 510) rotate(-85)">10' - 0"</text>
        <text fontSize="4" transform="translate(467 316) rotate(-36)">25' - 8 3/4"</text>
      </g>
    </svg>
  );
}

/* ---------- status bar ---------- */

function Grip() {
  return (
    <span className="flex w-[10px] shrink-0 flex-col items-center">
      <span className="h-[15px] w-[9px] bg-[radial-gradient(#aaa_1px,transparent_1px)] bg-[size:3px_3px]" />
      <span className="mt-[2px]"><Collapse /></span>
    </span>
  );
}

function StatusBar() {
  return (
    <footer className="flex h-8 shrink-0 items-center bg-[#f3f3f3] pl-px">
      <Grip />
      <button className="ml-[2px] flex shrink-0 items-center gap-[2px]">
        <Svg w={24} h={24}><Gear x={8} y={8} r={7.5} color="#929292" /><Gear x={17} y={17} r={6.5} color="#ffa63a" /></Svg>
        <span>Options...</span>
        <Chevron />
      </button>
      <span className="ml-[22px]"><Grip /></span>
      <TBtn label="First page" className="ml-1"><CircleArrow d="M7 6v10M15 6l-5 5 5 5" color="#a5cdec" /></TBtn>
      <TBtn label="Previous page" className="ml-[6px]"><CircleArrow d="M13 6l-5 5 5 5" color="#a5cdec" /></TBtn>
      <label className="ml-1 flex h-[23px] w-[95px] shrink-0 items-center rounded-[3px] border border-[#aaa] bg-white pr-[2px]">
        <input aria-label="Page" defaultValue="1" className="w-full min-w-0 bg-transparent text-right outline-none" />
        <span className="pl-px">/10</span>
      </label>
      <TBtn label="Next page" className="ml-[5px]"><CircleArrow d="M9 6l5 5-5 5" color="#2d9bf0" ring="#888" /></TBtn>
      <TBtn label="Last page" className="ml-[6px]"><CircleArrow d="M15 6v10M7 6l5 5-5 5" color="#2d9bf0" ring="#888" /></TBtn>
      <TBtn label="Back" className="ml-[9px]"><CircleArrow d={LEFT_ARROW} color="#9fc37c" /></TBtn>
      <TBtn label="Forward" className="ml-[6px]"><CircleArrow d={RIGHT_ARROW} color="#9fc37c" /></TBtn>
      <span className="ml-[5px]"><Grip /></span>
      <TBtn label="Single page" className="ml-[6px]"><Svg w={16} h={21}><path d="M.7.700h9l5 5v15H.7z" fill="#fff" stroke="#777" strokeWidth="1.200" /><path d="M9 0l6 7-4-1z" fill="#555" /></Svg></TBtn>
      <TBtn label="Continuous" className="ml-[6px] h-[27px] w-7 border border-[#cdbb8a] bg-[#e6d3a2]">
        <Svg w={17} h={23}><path d="M1 0v9h15V0M1 23V13h9l6 5v5" fill="#fff" stroke="#777" strokeWidth="1.200" /><path d="M9 12l7 8-4-1z" fill="#555" /></Svg>
      </TBtn>
      <TBtn label="Two pages" className="ml-[2px]">
        <Svg w={25} h={16}><path d="M1 1h6l4 4v10H1zM14 1h6l4 4v10H14z" fill="#fff" stroke="#777" strokeWidth="1.200" /><path d="M6 0l6 7-4-1zM19 0l6 7-4-1z" fill="#555" /></Svg>
      </TBtn>
      <TBtn label="Two pages continuous" className="ml-1">
        <Svg w={24} h={22}><path d="M1 0v9h9V0M14 0v9h9V0M1 22v-9h5l4 4v5M14 22v-9h5l4 4v5" fill="#fff" stroke="#777" strokeWidth="1.200" /><path d="M5 12l6 7-4-1zM18 12l6 7-4-1z" fill="#555" /></Svg>
      </TBtn>
      <span className="ml-[5px]"><Grip /></span>
      <div className="relative ml-px w-[82px] shrink-0">
        <select aria-label="Zoom" className="h-[23px] w-full appearance-none rounded-[3px] border border-[#aaa] bg-white pl-[3px]">
          <option>33.3%</option>
        </select>
        <span className="pointer-events-none absolute top-[9px] right-1"><Chevron /></span>
      </div>
      <span className="ml-[2px]"><Divider /></span>
      <TBtn label="Zoom out" className="ml-1"><CircleArrow d="M5 11h12" color="#2d9bf0" ring="#888" /></TBtn>
      <input
        type="range"
        aria-label="Zoom level"
        defaultValue={17}
        className="mx-[5px] h-5 w-[100px] shrink-0 appearance-none bg-transparent bg-[linear-gradient(#888_3px,transparent_3px_8px,#888_8px),linear-gradient(90deg,#999_20%,#c3c3c3_20%)] bg-[size:1px_11px,100%_2px] bg-[position:49px_center,center] bg-no-repeat [&::-webkit-slider-thumb]:h-[18px] [&::-webkit-slider-thumb]:w-[18px] [&::-webkit-slider-thumb]:appearance-none [&::-webkit-slider-thumb]:rounded-full [&::-webkit-slider-thumb]:border [&::-webkit-slider-thumb]:border-[#777] [&::-webkit-slider-thumb]:bg-[radial-gradient(circle,#777_4px,#fff_4px)]"
      />
      <TBtn label="Zoom in"><CircleArrow d="M5 11h12M11 5v12" color="#2d9bf0" ring="#888" /></TBtn>
      <span className="ml-[5px]"><Grip /></span>
      <TBtn label="Panel layout" className="ml-[7px]">
        <Svg w={16} h={12}><path d="M.5.500h15v11H.5z" fill="#fff" stroke="#aaa" /><path d="M0 1h16" stroke="#aaa" strokeWidth="2" /><path d="M5 3h6v7H5z" fill="#7fb9e6" /><path d="M2 4h2M2 6h2M2 8h2M12 4h2M12 6h2M12 8h2" stroke="#bbb" /></Svg>
      </TBtn>
      <TBtn label="Panel layout menu" className="ml-2"><Chevron color="#aaa" /></TBtn>
      <TBtn label="Next sheet" className="ml-auto self-start pt-px pr-[2px]"><Svg w={8} h={7}><path d="M1 1l3 3 3-3M0 6h8" stroke="#444" strokeWidth="1.200" /></Svg></TBtn>
    </footer>
  );
}

export default function App() {
  return (
    <div className="flex h-screen flex-col overflow-hidden rounded-lg border-l border-[#a0a0a0] bg-[#d4d4d4] font-['Open_Sans','Noto_Sans',sans-serif] text-[12px] leading-4 text-black">
      <TitleBar />
      <RibbonTabs />
      <div className="flex h-[103px] shrink-0 border-b border-[#555] bg-[#f3f3f3]">
        <ToolsGroup />
        <TextGroup />
        <NoteGroup />
        <MarkupGroup />
        <DrawingGroup />
        <MeasureAndMedia />
        <ManageGroup />
      </div>

      {/* document tabs */}
      <div className="flex h-[34px] shrink-0 items-stretch border-b-2 border-[#fbe3af] bg-[#888] bg-[repeating-conic-gradient(#0000000f_0_25%,transparent_0_50%)] bg-[size:4px_4px]">
        <div className="flex w-[92px] flex-col rounded-tr bg-[#fbe5b4] pt-2 pl-[5px]">
          <div className="flex items-start">
            <a href="#architecture">Architecture</a>
            <button aria-label="Close tab" className="ml-auto pr-[5px]">
              <Svg w={6} h={6}><path d="M.5.500l5 5M5.500.500l-5 5" stroke="#222" strokeWidth="1.500" /></Svg>
            </button>
          </div>
          <span className="mt-auto mb-[2px] h-[2px] w-[82px] bg-[#978a6c]" />
        </div>
        <TBtn label="New tab" className="my-[3px] ml-[2px] w-7 rounded-[2px] bg-[#cacaca]">
          <Svg w={15} h={15}><path d="M0 7.500h15M7.500 0v15" stroke="#222" /></Svg>
        </TBtn>
        <TBtn label="Close document" className="mt-[2px] mr-[2px] mb-[2px] ml-auto w-[30px] rounded-[2px] bg-[#cacaca]">
          <Svg w={12} h={12}><path d="M.5.500l11 11M11.500.500l-11 11" stroke="#222" strokeWidth="1.200" /></Svg>
        </TBtn>
      </div>

      <div className="flex min-h-0 flex-1">
        <SidePanel />
        <div className="flex min-w-0 flex-1 flex-col">
          <div className="flex min-h-0 flex-1 border-b border-[#555]">
            <main className="flex min-w-0 flex-1 justify-center overflow-hidden bg-[repeating-conic-gradient(#0000000a_0_25%,transparent_0_50%),linear-gradient(#8d8d8d,#b1b1b1_60%)] bg-[size:4px_4px,100%_100%] pr-[3px]">
              <Drawing />
            </main>
            <div className="flex w-[16px] shrink-0 flex-col items-center justify-between border-l border-[#555] bg-[#f3f3f3] py-1">
              <div className="flex flex-col items-center gap-[6px]">
                <Svg w={8} h={5}><path d="M1 4.500L4 1l3 3.500" stroke="#444" strokeWidth="1.300" /></Svg>
                <span className="h-5 w-[5px] rounded-full bg-[#808080]" />
              </div>
              <Svg w={8} h={5}><path d="M1 .5L4 4l3-3.500" stroke="#444" strokeWidth="1.300" /></Svg>
            </div>
          </div>
          <StatusBar />
        </div>
      </div>
    </div>
  );
}
